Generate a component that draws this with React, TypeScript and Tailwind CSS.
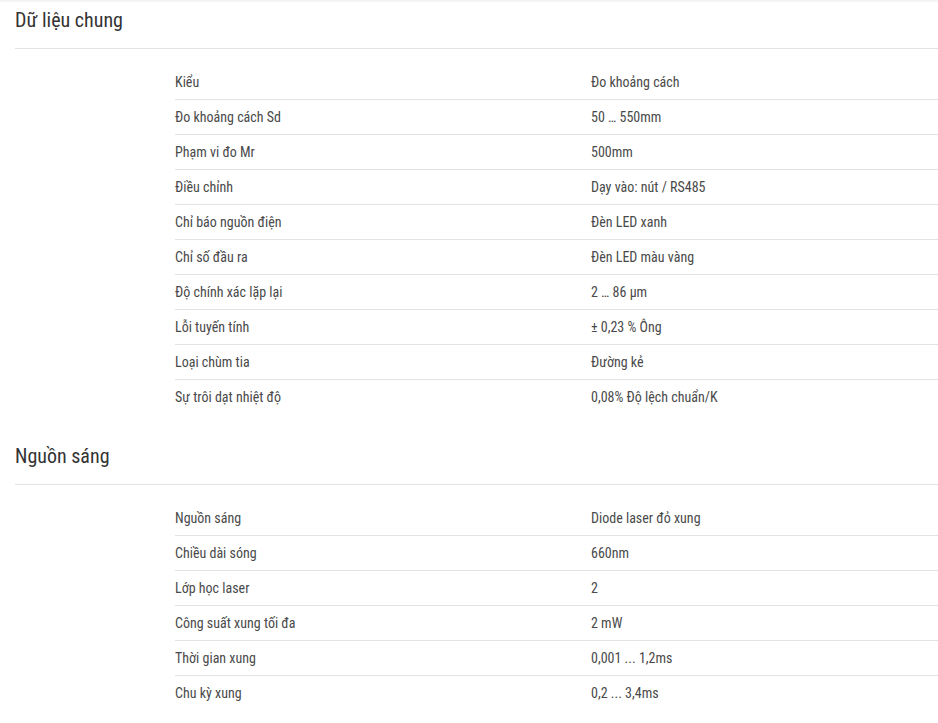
import React from 'react'

const sections = [
  {
    title: 'Dữ liệu chung',
    rows: [
      ['Kiểu', 'Đo khoảng cách'],
      ['Đo khoảng cách Sd', '50 … 550mm'],
      ['Phạm vi đo Mr', '500mm'],
      ['Điều chỉnh', 'Dạy vào: nút / RS485'],
      ['Chỉ báo nguồn điện', 'Đèn LED xanh'],
      ['Chỉ số đầu ra', 'Đèn LED màu vàng'],
      ['Độ chính xác lặp lại', '2 … 86 µm'],
      ['Lỗi tuyến tính', '± 0,23 % Ông'],
      ['Loại chùm tia', 'Đường kẻ'],
      ['Sự trôi dạt nhiệt độ', '0,08% Độ lệch chuẩn/K'],
    ],
  },
  {
    title: 'Nguồn sáng',
    rows: [
      ['Nguồn sáng', 'Diode laser đỏ xung'],
      ['Chiều dài sóng', '660nm'],
      ['Lớp học laser', '2'],
      ['Công suất xung tối đa', '2 mW'],
      ['Thời gian xung', '0,001 ... 1,2ms'],
      ['Chu kỳ xung', '0,2 ... 3,4ms'],
    ],
  },
]

export default function App() {
  return (
    <div className="relative min-h-[723px] bg-white pl-[15px] font-['Roboto','Liberation_Sans',sans-serif] [font-stretch:75%]">
      {/* faint top shadow */}
      <div className="absolute left-0 right-0 top-0 h-[3px] bg-gradient-to-b from-black/[0.06] to-transparent" />

      {sections.map((s, i) => (
        <div key={i} className={i === 0 ? 'pt-[6px]' : 'pt-[28px]'}>
          <h2 className="border-b border-[#e3e3e3] pb-[14px] text-[20px] leading-[28px] text-[#333]">{s.title}</h2>
          <table className="ml-[160px] mt-[15px] w-[763px] border-collapse text-left text-[14px] text-[#4a4a4a]">
            <tbody>
              {s.rows.map((r, j) => (
                <tr key={j} className={j < s.rows.length - 1 ? 'border-b border-[#e3e3e3]' : ''}>
                  <td className="h-[35px] w-[416px] p-0 pt-[2px] align-middle">{r[0]}</td>
                  <td className="h-[35px] p-0 pt-[2px] align-middle">{r[1]}</td>
                </tr>
              ))}
            </tbody>
          </table>
        </div>
      ))}
    </div>
  )
}
